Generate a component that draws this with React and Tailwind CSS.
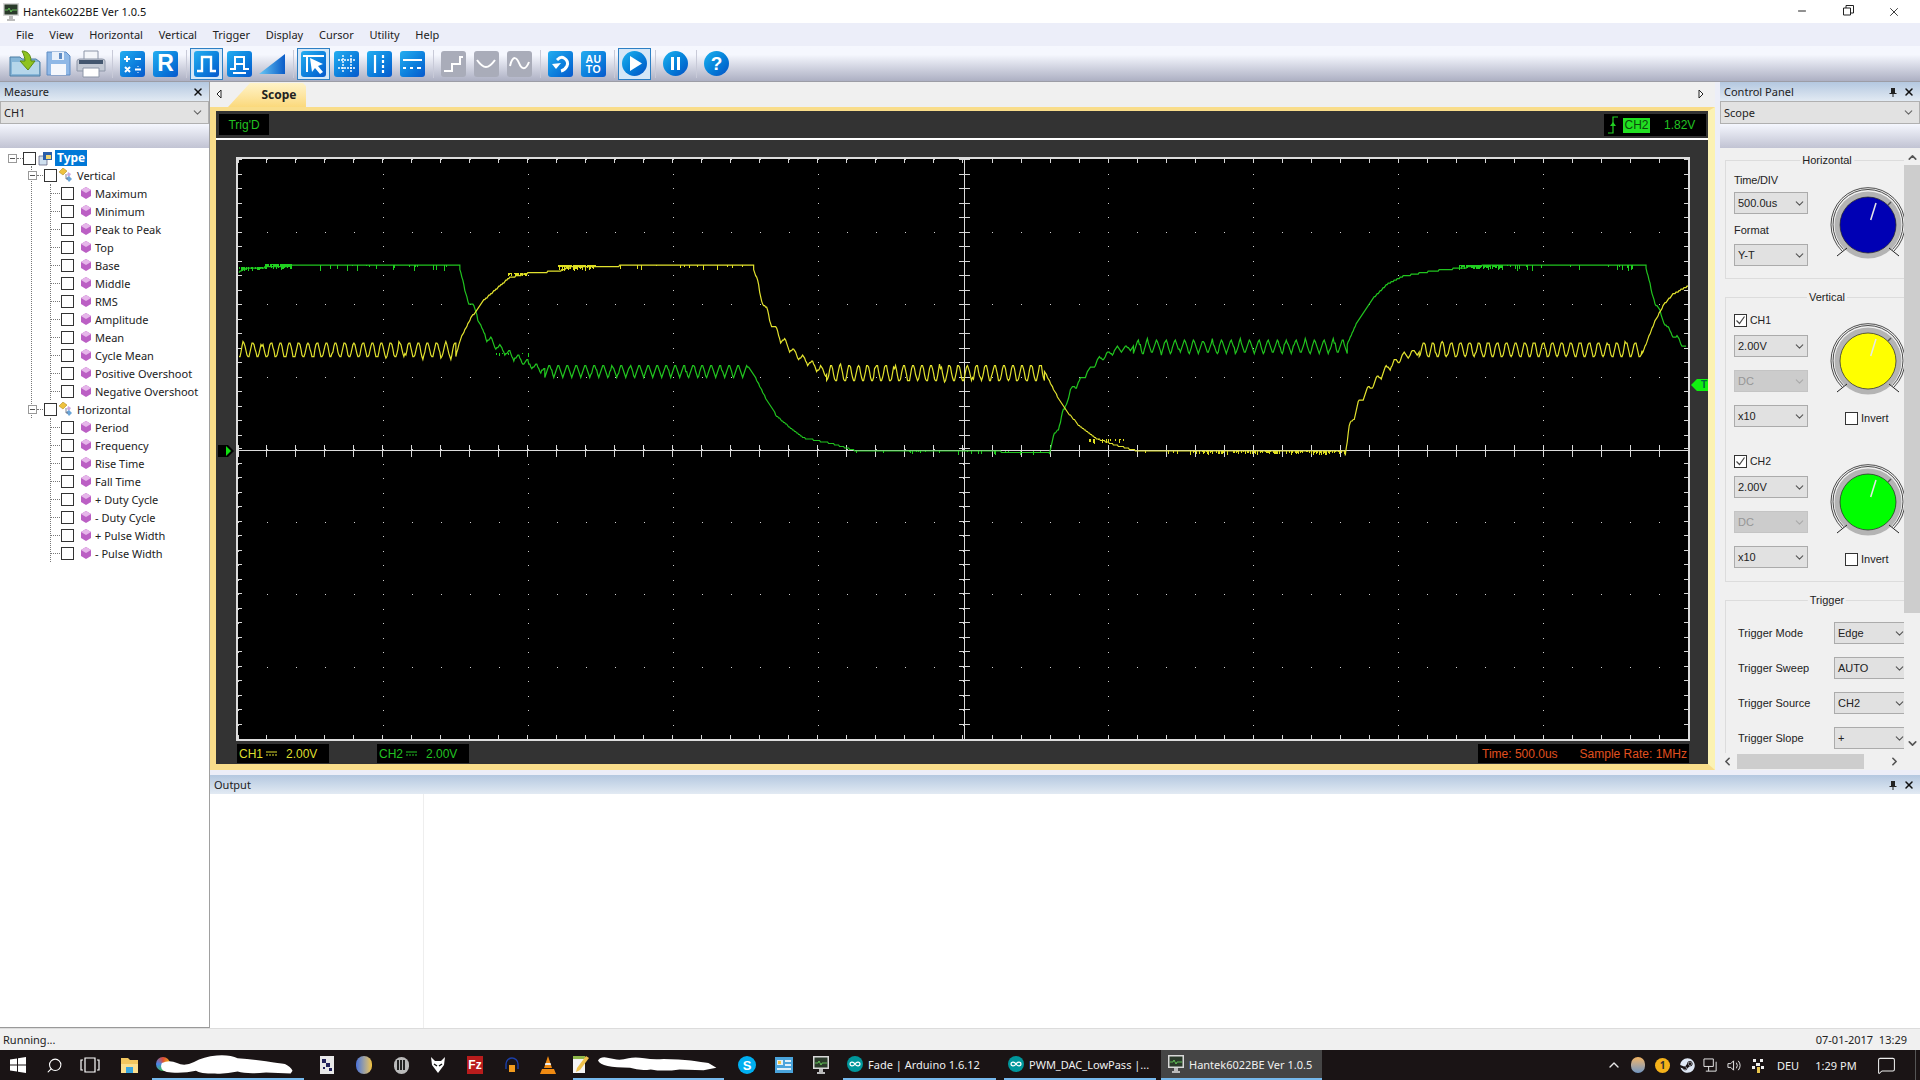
import React from 'react';
import { ChevronDown, ChevronUp, Minus, X, Search, MessageSquare, ChevronLeft, ChevronRight } from 'lucide-react';
import { FaSteam } from 'react-icons/fa';

// waveform helpers
function rng(seed) {
  let s = seed;
  return () => {
    s = (s * 9301 + 49297) % 233280;
    return s / 233280;
  };
}

function interp(keys, x) {
  for (let i = 1; i < keys.length; i++) {
    if (x <= keys[i][0]) {
      const [x0, y0] = keys[i - 1];
      const [x1, y1] = keys[i];
      return y0 + ((y1 - y0) * (x - x0)) / (x1 - x0 || 1);
    }
  }
  return keys[keys.length - 1][1];
}

// each segment: keys, ripple amplitude, ripple period
function trace(segs, seed) {
  const r = rng(seed);
  const pts = [];
  segs.forEach(({ keys, amp = 0, period = 9, square = false }) => {
    const start = keys[0][0];
    const end = keys[keys.length - 1][0];
    for (let x = start; x <= end; x += 1) {
      const ph = ((x - start) % period) / period;
      let tri = Math.abs(2 * ph - 1) * 2 - 1;
      if (square) tri = Math.max(-1, Math.min(1, tri * 1.7));
      let y = interp(keys, x) + amp * tri;
      if (amp > 0 && r() > 0.88) y += amp * 0.8 * (r() - 0.5);
      y = Math.round(y / 1.5) * 1.5;
      pts.push(`${x},${y}`);
    }
  });
  return pts.join(' ');
}

// short vertical spikes around a flat part of a trace
function spikes(x0, x1, y, density, len, seed) {
  const r = rng(seed);
  let d = '';
  for (let x = x0; x < x1; x += 1) {
    if (r() < density) d += `M${x} ${y}v${Math.round(1 + r() * len)}`;
  }
  return d;
}

const green = trace(
  [
    { keys: [[239, 272], [242, 268], [268, 266], [300, 264], [460, 264]] },
    { keys: [[460, 264], [465, 292], [471, 303], [477, 312], [483, 332], [494, 343], [511, 354], [532, 364], [545, 370]], amp: 4, period: 9 },
    { keys: [[545, 370], [747, 370]], amp: 7, period: 9 },
    { keys: [[747, 364], [754, 373], [766, 397], [777, 415], [792, 428], [804, 437], [830, 442], [857, 450]] },
    { keys: [[857, 450], [1050, 451]] },
    { keys: [[1050, 450], [1054, 437], [1060, 423], [1071, 390], [1083, 377], [1100, 358], [1118, 348], [1134, 346]], amp: 3, period: 9 },
    { keys: [[1134, 345.5], [1348, 345.5]], amp: 7.5, period: 9.3 },
    { keys: [[1348, 343], [1357, 323], [1373, 298], [1388, 283], [1404, 275], [1433, 270], [1460, 267], [1490, 264], [1647, 264]] },
    { keys: [[1647, 264], [1652, 290], [1661, 312], [1670, 330], [1681, 340], [1687, 347]], amp: 3, period: 9 },
  ],
  7,
);

const yellow = trace(
  [
    { keys: [[239, 349], [456, 349]], amp: 6.5, period: 9.2, square: true },
    { keys: [[456, 355], [461, 337], [471, 317], [483, 300], [494, 290], [509, 277], [528, 272], [559, 270], [574, 265], [754, 264]] },
    { keys: [[754, 264], [760, 292], [771, 320], [781, 337], [796, 353], [827, 372]], amp: 4, period: 9 },
    { keys: [[827, 372], [1045, 372]], amp: 7, period: 9.1, square: true },
    { keys: [[1045, 370], [1056, 392], [1067, 410], [1080, 425], [1096, 437], [1116, 444], [1138, 450], [1346, 450]] },
    { keys: [[1346, 450], [1350, 428], [1359, 403], [1370, 387], [1388, 367], [1404, 355], [1420, 350]], amp: 4, period: 9 },
    { keys: [[1420, 348.5], [1643, 348.5]], amp: 6.5, period: 9.2, square: true },
    { keys: [[1643, 353], [1656, 320], [1665, 303], [1674, 293], [1689, 285]] },
  ],
  13,
);

const greenSpikes =
  spikes(240, 266, 266, 0.6, 3, 3) +
  spikes(266, 293, 263, 0.95, 5, 5) +
  spikes(293, 450, 264, 0.12, 5, 9) +
  spikes(1460, 1504, 264, 0.85, 4, 11) +
  spikes(1504, 1640, 264, 0.1, 5, 15) +
  spikes(857, 1050, 450, 0.1, 3, 21) +
  spikes(495, 530, 352, 0.05, 3, 22);

const yellowSpikes =
  spikes(509, 528, 272, 0.8, 3, 31) +
  spikes(559, 597, 264, 0.9, 5, 33) +
  spikes(597, 750, 264, 0.1, 5, 37) +
  spikes(1140, 1185, 450, 0.1, 3, 41) +
  spikes(1185, 1346, 450, 0.5, 3, 43) +
  spikes(1090, 1125, 438, 0.35, 5, 45);

const cols = Array.from({ length: 11 }, (_, i) => 238 + i * 145.1);
const rows = Array.from({ length: 9 }, (_, i) => 158 + i * 72.5);

function ScopeGrid() {
  let dots = '';
  let ticks = '';
  cols.forEach((x) => {
    for (let y = 158; y < 738; y += 14.5) dots += `M${Math.round(x)} ${Math.round(y)}h1v1h-1z`;
  });
  rows.forEach((y) => {
    for (let x = 238; x < 1689; x += 29.02) dots += `M${Math.round(x)} ${Math.round(y)}h1v1h-1z`;
  });
  for (let x = 238; x < 1689; x += 29.02) {
    const X = Math.round(x);
    ticks += `M${X} 444v12M${X} 158v4M${X} 738v-4`;
  }
  for (let y = 158; y < 738; y += 14.5) {
    const Y = Math.round(y);
    ticks += `M959 ${Y}h12M238 ${Y}h4M1689 ${Y}h-4`;
  }
  return (
    <g shapeRendering="crispEdges">
      <path d={dots} fill="#cfcfcf" />
      <path d={ticks} stroke="#d8d8d8" strokeWidth="1" fill="none" />
      <path d="M238 450H1689M965 158V738" stroke="#dcdcdc" strokeWidth="1" fill="none" />
    </g>
  );
}

function Tile({ gray, children, className = '' }) {
  return (
    <div
      className={`flex h-[26px] w-[25px] shrink-0 items-center justify-center rounded-[3px] ${
        gray ? 'bg-[#a9acb9]' : 'bg-linear-to-br from-[#25aef0] to-[#0a58cc]'
      } ${className}`}
    >
      {children}
    </div>
  );
}

function Glyph({ d, width = 2, dash }) {
  return (
    <svg viewBox="0 0 25 26" className="h-[26px] w-[25px]">
      <path d={d} fill="none" stroke="#fff" strokeWidth={width} strokeDasharray={dash} />
    </svg>
  );
}

function Selected({ children, className = '' }) {
  return (
    <div className={`flex h-[32px] w-[33px] shrink-0 items-center justify-center border border-[#2d7fc4] bg-[#d5e7f7] ${className}`}>
      {children}
    </div>
  );
}

function Round({ children, className = '' }) {
  return (
    <div className={`flex h-[25px] w-[25px] shrink-0 items-center justify-center rounded-full bg-linear-to-br from-[#1fb3ef] to-[#0a50c4] text-white ${className}`}>
      {children}
    </div>
  );
}

function Sep({ className = '' }) {
  return <div className={`h-[28px] w-px shrink-0 bg-[#c8cad8] ${className}`} />;
}

function Toolbar() {
  return (
    <div className="flex h-[36px] items-center border-b border-[#9c9da6] bg-linear-to-b from-[#f5f7fe] from-25% to-[#adb0c3] pl-[9px]">
      <svg viewBox="0 0 32 28" className="h-[28px] w-[32px] shrink-0">
        <path d="M1 7h10l2 2h14l4 3v14H1z" fill="#86b6d8" stroke="#4d7ea5" />
        <path d="M3 12h27v12H3z" fill="#b5d6ea" />
        <path d="M13 1c5 0 9 3 9 10h4l-7 9-8-9h5c0-3-1-6-3-10z" fill="#8fc31f" stroke="#5b8a10" />
      </svg>
      <svg viewBox="0 0 25 25" className="ml-[5px] h-[25px] w-[25px] shrink-0">
        <path d="M1 1h19l4 4v19H1z" fill="#8fb8e6" stroke="#5f8cc4" />
        <path d="M6 1h12v8H6z" fill="#e9f1fb" />
        <path d="M13 2h3v6h-3z" fill="#5f8cc4" />
        <path d="M5 13h15v11H5z" fill="#f4f7fc" />
      </svg>
      <svg viewBox="0 0 30 28" className="ml-[5px] h-[28px] w-[30px] shrink-0">
        <path d="M8 1h14v9H8z" fill="#f4f6fa" stroke="#8d96a8" />
        <path d="M1 11q0-2 3-2h22q3 0 3 2v10H1z" fill="#c3c9d4" stroke="#8d96a8" />
        <path d="M3 10h24v4H3z" fill="#43566f" />
        <path d="M7 18h16v9H7z" fill="#fff" stroke="#8d96a8" />
      </svg>
      <Sep className="ml-[6px]" />
      <Tile className="ml-[7px]">
        <Glyph d="M4 8h6M7 5v6M15 8h6M5 16l5 5M10 16l-5 5M15 18.500h6M18 15.500v.5M18 21v.5" />
      </Tile>
      <Tile className="ml-[8px] font-['Liberation_Sans',sans-serif] text-[23px] font-bold text-white">R</Tile>
      <Sep className="ml-[8px]" />
      <Selected className="ml-[3px]">
        <Tile>
          <Glyph d="M3 20h5V6h9v14h5" width="2.4" />
        </Tile>
      </Selected>
      <Tile className="ml-[4px]">
        <Glyph d="M3 18h5V6h9v12h5M9 13h7M6 22h13" width="2" />
      </Tile>
      <svg viewBox="0 0 26 20" className="ml-[7px] h-[20px] w-[26px] shrink-0">
        <defs>
          <linearGradient id="ramp" x1="0" y1="0" x2="1" y2="0">
            <stop offset="0" stopColor="#69c8f5" />
            <stop offset="1" stopColor="#0b5cc8" />
          </linearGradient>
        </defs>
        <path d="M0 20L26 0V20z" fill="url(#ramp)" />
      </svg>
      <Sep className="ml-[8px]" />
      <Selected className="ml-[3px]">
        <Tile>
          <svg viewBox="0 0 25 26" className="h-[26px] w-[25px]">
            <path d="M2 5h21M6 5v16" stroke="#fff" strokeWidth="2" fill="none" />
            <path d="M9 7l13 6-5 2 5 6-3 2-5-6-3 4z" fill="#fff" />
          </svg>
        </Tile>
      </Selected>
      <Tile className="ml-[4px]">
        <Glyph d="M4 9h17M4 17h17M9 4v18M17 4v18" width="1.4" dash="2 1" />
      </Tile>
      <Tile className="ml-[8px]">
        <svg viewBox="0 0 25 26" className="h-[26px] w-[25px]">
          <path d="M8 4v18" stroke="#fff" strokeWidth="2.200" />
          <path d="M16 4v18" stroke="#fff" strokeWidth="2.200" strokeDasharray="3 2" />
        </svg>
      </Tile>
      <Tile className="ml-[8px]">
        <Glyph d="M3 9h19M3 17h3M10 17h3M17 17h4" width="2" />
      </Tile>
      <Sep className="ml-[8px]" />
      <Tile gray className="ml-[7px]">
        <Glyph d="M3 20h8v-7h8V6h3" width="2" />
      </Tile>
      <Tile gray className="ml-[8px]">
        <Glyph d="M3 9q5 7 9 7t9-7" width="2" />
      </Tile>
      <Tile gray className="ml-[8px]">
        <Glyph d="M3 15c3-12 7-8 9-3s6 9 10-1" width="2" />
      </Tile>
      <Sep className="ml-[8px]" />
      <Tile className="ml-[7px]">
        <svg viewBox="0 0 25 26" className="h-[26px] w-[25px]">
          <path d="M9 9q4-4 7-2 5 3 3 8-2 4-6 5" fill="none" stroke="#fff" strokeWidth="3" />
          <path d="M4 13l9-1-5 6z" fill="#fff" />
        </svg>
      </Tile>
      <Tile className="ml-[8px] flex-col font-['Liberation_Sans',sans-serif] text-[10.5px] leading-[10px] font-bold tracking-[0.5px] text-white">
        <span>AU</span>
        <span>TO</span>
      </Tile>
      <Sep className="ml-[8px]" />
      <Selected className="ml-[3px]">
        <Round>
          <svg viewBox="0 0 25 25" className="h-[25px] w-[25px]">
            <path d="M8 5l12 7.500L8 20z" fill="#fff" />
          </svg>
        </Round>
      </Selected>
      <Sep className="ml-[4px]" />
      <Round className="ml-[7px]">
        <svg viewBox="0 0 25 25" className="h-[25px] w-[25px]">
          <path d="M8 6h3v13H8zM14 6h3v13h-3z" fill="#fff" />
        </svg>
      </Round>
      <Sep className="ml-[8px]" />
      <Round className="ml-[7px] font-['Liberation_Sans',sans-serif] text-[19px] font-bold">?</Round>
    </div>
  );
}

function Gem() {
  return (
    <svg viewBox="0 0 10 12" className="h-[12px] w-[10px] shrink-0">
      <path d="M5 0l5 3v6l-5 3-5-3V3z" fill="#bb5fc4" />
      <path d="M5 0l5 3-5 3-5-3z" fill="#e6b6ea" />
    </svg>
  );
}

function Folderish() {
  return (
    <svg viewBox="0 0 15 15" className="h-[15px] w-[15px] shrink-0">
      <path d="M1 4l4-4 4 3-4 4z" fill="#eec23f" stroke="#a67f10" strokeWidth=".5" />
      <path d="M10 4l3 2-2 3-2-2z" fill="#c9a9e0" />
      <path d="M8 10l3-2 3 3-3 3z" fill="#6aa5d8" />
      <path d="M8 6v5h2" fill="none" stroke="#667" strokeWidth=".8" />
    </svg>
  );
}

function Check({ on }) {
  return (
    <div className="flex h-[13px] w-[13px] shrink-0 items-center justify-center border border-[#333] bg-white">
      {on && (
        <svg viewBox="0 0 11 11" className="h-[11px] w-[11px]">
          <path d="M1.500 5.500l3 3 5-7" fill="none" stroke="#444" strokeWidth="1.200" />
        </svg>
      )}
    </div>
  );
}

function ExpandBox({ className = '' }) {
  return (
    <div className={`relative flex h-[9px] w-[9px] shrink-0 items-center justify-center border border-[#999] bg-white ${className}`}>
      <div className="h-px w-[5px] bg-[#555]" />
    </div>
  );
}

function Leaf({ label }) {
  return (
    <div className="flex h-[18px] items-center last:-mb-[9px]">
      <div className="w-[9px] border-t border-dotted border-[#777]" />
      <div className="ml-px">
        <Check />
      </div>
      <div className="ml-[7px]">
        <Gem />
      </div>
      <span className="ml-[4px] whitespace-nowrap">{label}</span>
    </div>
  );
}

function Branch({ label }) {
  return (
    <div className="flex h-[18px] items-center">
      <ExpandBox className="-ml-[4px]" />
      <div className="w-[6px] border-t border-dotted border-[#777]" />
      <div className="ml-px">
        <Check />
      </div>
      <div className="ml-px">
        <Folderish />
      </div>
      <span className="ml-[4px]">{label}</span>
    </div>
  );
}

const verticalItems = ['Maximum', 'Minimum', 'Peak to Peak', 'Top', 'Base', 'Middle', 'RMS', 'Amplitude', 'Mean', 'Cycle Mean', 'Positive Overshoot', 'Negative Overshoot'];
const horizontalItems = ['Period', 'Frequency', 'Rise Time', 'Fall Time', '+ Duty Cycle', '- Duty Cycle', '+ Pulse Width', '- Pulse Width'];

function MeasureTree() {
  return (
    <div className="min-h-0 flex-1 border-b border-[#999] bg-white text-[#222]">
      <div className="flex h-[18px] translate-y-px items-center pl-[8px]">
        <ExpandBox />
        <div className="w-[6px] border-t border-dotted border-[#777]" />
        <Check />
        <svg viewBox="0 0 15 15" className="ml-[2px] h-[15px] w-[15px] shrink-0">
          <path d="M1 5h8v9H1z" fill="#cfe0ef" stroke="#557" strokeWidth=".7" />
          <path d="M5 1h9v8H5z" fill="#2c5fa8" />
          <path d="M8 4h5v4H8z" fill="#f2d873" />
        </svg>
        <span className="ml-[2px] flex h-[16px] items-center bg-[#0078d7] px-[2px] text-[12px] font-bold text-white">Type</span>
      </div>
      <div className="mb-[9px] ml-[31px] border-l border-dotted border-[#777] last:mb-0">
        <Branch label="Vertical" />
        <div className="mb-[9px] ml-[18px] border-l border-dotted border-[#777]">
          {verticalItems.map((t) => (
            <Leaf key={t} label={t} />
          ))}
        </div>
        <div className="-mb-[9px]">
          <Branch label="Horizontal" />
        </div>
      </div>
      <div className="ml-[50px] border-l border-dotted border-[#777]">
        {horizontalItems.map((t) => (
          <Leaf key={t} label={t} />
        ))}
      </div>
    </div>
  );
}

function PanelHeader({ title, pin }) {
  return (
    <div className="flex h-[19px] items-center bg-linear-to-b from-[#b4c8e0] to-[#e2eaf3] pr-[5px] pl-[4px] text-[#222]">
      <span className="pb-px">{title}</span>
      {pin && (
        <svg viewBox="0 0 10 10" className="mr-[5px] ml-auto h-[10px] w-[10px]">
          <path d="M3 1h4v5h1.500v1H5.500v3h-1V7h-3V6H3z" fill="#222" />
        </svg>
      )}
      <X size={12} strokeWidth={3} className={pin ? '' : 'ml-auto'} color="#111" />
    </div>
  );
}

function Combo({ label }) {
  return (
    <div className="flex h-[23px] items-center border border-[#b0b0b0] bg-[#e2e2e2] pr-[4px] pl-[3px] text-[#222]">
      <span>{label}</span>
      <ChevronDown size={13} className="ml-auto" color="#666" />
    </div>
  );
}

function Band() {
  return <div className="h-[24px] bg-linear-to-b from-[#f5f7fe] to-[#c1c3d3]" />;
}

function Select({ label, disabled }) {
  return (
    <div
      className={`flex h-[22px] w-[74px] shrink-0 items-center border pl-[3px] font-['Liberation_Sans',sans-serif] text-[11px] ${
        disabled ? 'border-[#c4c4c4] bg-[#cccccc] text-[#969696]' : 'border-[#ababab] bg-[#e1e1e1] text-[#222]'
      }`}
    >
      <span>{label}</span>
      <ChevronDown size={13} className="mr-[1px] ml-auto" color={disabled ? '#aaa' : '#555'} />
    </div>
  );
}

function Knob({ color, className = '' }) {
  return (
    <svg viewBox="-38 -38 76 76" className={`h-[76px] w-[76px] shrink-0 overflow-visible ${className}`}>
      <path d="M-26 26A37 37 0 1 1 26 26" fill="none" stroke="#222" strokeWidth=".8" />
      <path d="M-24.500 24.500A35 35 0 1 1 24.500 24.500" fill="none" stroke="#222" strokeWidth=".8" />
      <circle r="33.500" fill="#b4b4b4" />
      <circle r="28" fill={color} stroke="#222" strokeWidth=".7" />
      <path d="M2.700 -5L8 -22" stroke="#e6e6e6" strokeWidth="1.500" />
      <path d="M20 -20L23 -23" stroke="#555" strokeWidth="1.500" />
      <path d="M-31 31L-21 23M31 31L21 23" stroke="#222" strokeWidth="1" />
    </svg>
  );
}

function Group({ title, className = '', children }) {
  return (
    <div className={`relative w-[204px] border border-[#dcdcdc] ${className}`}>
      <span className="absolute -top-[6px] left-1/2 -translate-x-1/2 bg-[#f0f0f0] px-[2px] font-['Liberation_Sans',sans-serif] text-[11px] text-[#222]">
        {title}
      </span>
      {children}
    </div>
  );
}

function Channel({ name, color, volts }) {
  return (
    <div className="flex">
      <div className="w-[74px]">
        <div className="flex h-[13px] items-center gap-[3px]">
          <Check on />
          <span className="font-['Liberation_Sans',sans-serif] text-[10.500px] text-[#222]">{name}</span>
        </div>
        <div className="mt-[8px]">
          <Select label={volts} />
        </div>
        <div className="mt-[13px]">
          <Select label="DC" disabled />
        </div>
        <div className="mt-[13px]">
          <Select label="x10" />
        </div>
      </div>
      <div className="ml-[22px]">
        <Knob color={color} className="mt-[9px]" />
        <div className="mt-[13px] ml-[15px] flex items-center gap-[3px] font-['Liberation_Sans',sans-serif] text-[11px] text-[#222]">
          <Check />
          <span>Invert</span>
        </div>
      </div>
    </div>
  );
}

function TriggerRow({ label, value }) {
  return (
    <div className="mb-[13px] flex items-center pl-[12px] font-['Liberation_Sans',sans-serif] text-[11px] text-[#222]">
      <span className="w-[96px]">{label}</span>
      <Select label={value} />
    </div>
  );
}

function ControlPanel() {
  return (
    <div className="flex w-[200px] shrink-0 flex-col">
      <PanelHeader title="Control Panel" pin />
      <Combo label="Scope" />
      <Band />
      <div className="flex h-[605px]">
        <div className="h-full w-[184px] overflow-hidden bg-[#f0f0f0] pt-[12px] pl-[5px]">
          <Group title="Horizontal" className="h-[119px]">
            <div className="flex pl-[8px]">
              <div className="w-[74px]">
                <div className="mt-[11px] flex h-[16px] items-center font-['Liberation_Sans',sans-serif] text-[11px] tracking-[-0.2px] text-[#222]">Time/DIV</div>
                <div className="mt-[4px]">
                  <Select label="500.0us" />
                </div>
                <div className="mt-[8px] flex h-[16px] items-center font-['Liberation_Sans',sans-serif] text-[11px] text-[#222]">Format</div>
                <div className="mt-[6px]">
                  <Select label="Y-T" />
                </div>
              </div>
              <Knob color="#0000b4" className="mt-[26px] ml-[22px]" />
            </div>
          </Group>
          <Group title="Vertical" className="mt-[18px] h-[285px]">
            <div className="pt-[16px] pl-[8px]">
              <Channel name="CH1" color="#ffff00" volts="2.00V" />
              <div className="mt-[28px]">
                <Channel name="CH2" color="#00ff00" volts="2.00V" />
              </div>
            </div>
          </Group>
          <Group title="Trigger" className="mt-[18px] h-[200px] pt-[21px]">
            <TriggerRow label="Trigger Mode" value="Edge" />
            <TriggerRow label="Trigger Sweep" value="AUTO" />
            <TriggerRow label="Trigger Source" value="CH2" />
            <TriggerRow label="Trigger Slope" value="+" />
          </Group>
        </div>
        <div className="flex w-[16px] flex-col items-center bg-[#f0f0f0]">
          <ChevronUp size={13} strokeWidth={3} color="#555" className="mt-[3px]" />
          <div className="mt-[1px] h-[448px] w-full bg-[#cdcdcd]" />
          <ChevronDown size={13} strokeWidth={3} color="#555" className="mt-auto mb-[3px]" />
        </div>
      </div>
      <div className="flex h-[17px] items-center bg-[#f0f0f0]">
        <ChevronLeft size={13} strokeWidth={3} color="#555" className="ml-[1px]" />
        <div className="ml-[3px] h-[15px] w-[127px] bg-[#cdcdcd]" />
        <ChevronRight size={13} strokeWidth={3} color="#555" className="ml-[24px]" />
      </div>
    </div>
  );
}

function Coupling({ className }) {
  return (
    <svg viewBox="0 0 11 5" className={`h-[5px] w-[11px] ${className}`}>
      <path d="M0 1h11" stroke="currentColor" />
      <path d="M0 4h11" stroke="currentColor" strokeDasharray="2 1" />
    </svg>
  );
}

function ScopeView() {
  return (
    <div className="flex w-[1505px] shrink-0 flex-col">
      {/* tab strip */}
      <div className="relative flex h-[25px] items-end bg-[#f0f0f0]">
        <svg viewBox="0 0 6 10" className="mb-[8px] ml-[6px] h-[10px] w-[6px]">
          <path d="M5 1L1 5l4 4z" fill="#fff" stroke="#222" />
        </svg>
        <div className="ml-[6px] flex h-[24px] w-[78px] items-center justify-center bg-linear-to-b from-[#fff3c8] to-[#fbd97c] pl-[24px] text-[12px] font-bold text-[#222] [clip-path:polygon(0_100%,22px_0,75px_0,78px_3px,78px_100%)]">
          Scope
        </div>
        <svg viewBox="0 0 6 10" className="mr-[11px] mb-[8px] ml-auto h-[10px] w-[6px]">
          <path d="M1 1l4 4-4 4z" fill="#fff" stroke="#222" />
        </svg>
      </div>
      {/* yellow frame */}
      <div className="flex h-[663px] flex-col border-t-[4px] border-r-[7px] border-b-[6px] border-l-[6px] border-t-[#f9dd8a] border-r-[#fbf2b4] border-b-[#f9dd8a] border-l-[#f9dd8a] bg-[#333333] font-['Liberation_Sans',sans-serif] text-[12px]">
        <div className="flex h-[27px] items-start justify-between pt-[3px] pr-[2px] pl-[3px]">
          <div className="flex h-[21px] w-[50px] items-center justify-center bg-black text-[#22c322]">Trig'D</div>
          <div className="flex h-[22px] w-[102px] items-center bg-black pl-[4px] text-[#22c322]">
            <svg viewBox="0 0 10 18" className="h-[18px] w-[10px]">
              <path d="M0 17h5V1h5" fill="none" stroke="#22d022" strokeWidth="1.200" />
              <path d="M2 10l3-4 3 4z" fill="#22d022" />
            </svg>
            <span className="ml-[5px] flex h-[15px] w-[27px] items-center justify-center bg-[#22e022] text-[#0b4a0b]">CH2</span>
            <span className="ml-[14px]">1.82V</span>
          </div>
        </div>
        <div className="h-[2px] bg-white" />
        <div className="relative pt-[17px] pr-[18px] pl-[20px]">
          <svg viewBox="0 0 17 12" className="absolute top-[305px] left-[2px] h-[12px] w-[17px]">
            <path d="M0 0h10l6 6-6 6H0z" fill="#000" />
            <path d="M8 1l5 5-5 5z" fill="#10e010" />
          </svg>
          <div className="absolute top-[239px] right-0 flex h-[12px] w-[17px] items-center justify-end bg-[#10f010] pr-[1px] text-[10px] font-bold text-[#064] [clip-path:polygon(100%_0,35%_0,0_50%,35%_100%,100%_100%)]">
            T
          </div>
          <div className="h-[584px] border-2 border-[#dddddd] bg-black">
            <svg viewBox="238 158 1451 580" className="h-[580px] w-full">
              <ScopeGrid />
              <polyline points={green} fill="none" stroke="#21c41f" strokeWidth="1.200" />
              <path d={greenSpikes} stroke="#20cf20" strokeWidth="1" fill="none" shapeRendering="crispEdges" />
              <polyline points={yellow} fill="none" stroke="#e2e22e" strokeWidth="1.200" />
              <path d={yellowSpikes} stroke="#dede20" strokeWidth="1" fill="none" shapeRendering="crispEdges" />
            </svg>
          </div>
        </div>
        <div className="flex flex-1 items-start pt-[3px] pr-[19px] pl-[21px]">
          <div className="flex h-[19px] w-[92px] items-center bg-black pl-[2px] text-[#dede2e]">
            <span>CH1</span>
            <Coupling className="ml-[3px]" />
            <span className="ml-[9px]">2.00V</span>
          </div>
          <div className="ml-[48px] flex h-[19px] w-[92px] items-center bg-black pl-[2px] text-[#22c322]">
            <span>CH2</span>
            <Coupling className="ml-[3px]" />
            <span className="ml-[9px]">2.00V</span>
          </div>
          <div className="ml-auto flex h-[19px] w-[211px] items-center bg-black pl-[4px] text-[#e0501f]">
            <span>Time: 500.0us</span>
            <span className="ml-[22px]">Sample Rate: 1MHz</span>
          </div>
        </div>
      </div>
    </div>
  );
}

function TaskIcon({ className = '', children }) {
  return <div className={`flex h-full shrink-0 items-center justify-center ${className}`}>{children}</div>;
}

function ArduinoLogo() {
  return (
    <svg viewBox="0 0 16 16" className="h-[16px] w-[16px] shrink-0">
      <circle cx="8" cy="8" r="8" fill="#00979c" />
      <path d="M8 8c-2-3-5-2-5 0s3 3 5 0 5-2 5 0-3 3-5 0" fill="none" stroke="#fff" strokeWidth="1.300" />
    </svg>
  );
}

function MonitorLogo() {
  return (
    <svg viewBox="0 0 16 18" className="h-[18px] w-[16px] shrink-0">
      <path d="M0 0h16v13H0z" fill="#d8d8d8" />
      <path d="M1.500 1.500h13v10h-13z" fill="#2a3a2a" />
      <path d="M2 7h3l1-2 2 4 1-2h5" fill="none" stroke="#6fdc5f" strokeWidth=".8" />
      <path d="M6 13h4v3h2v2H4v-2h2z" fill="#bbb" />
    </svg>
  );
}

function AppButton({ className = '', active, icon, label }) {
  return (
    <div className={`relative flex h-full shrink-0 items-center border-b-2 border-[#76b9ed] pl-[4px] ${active ? 'bg-[#454545]' : ''} ${className}`}>
      {icon}
      <span className="ml-[5px] whitespace-nowrap">{label}</span>
    </div>
  );
}

function Taskbar() {
  return (
    <div className="flex h-[30px] items-center bg-[#1a1415] text-[11px] text-[#f0f0f0]">
      <TaskIcon className="w-[36px]">
        <svg viewBox="0 0 16 16" className="h-[16px] w-[16px]">
          <path d="M0 2.500l7-1v6H0zM8 1.300L16 0v7.500H8zM0 8.500h7v6l-7-1zM8 8.500h8V16l-8-1.300z" fill="#fff" />
        </svg>
      </TaskIcon>
      <TaskIcon className="w-[36px]">
        <Search size={17} color="#fff" className="-scale-x-100" strokeWidth={1.500} />
      </TaskIcon>
      <TaskIcon className="w-[35px]">
        <svg viewBox="0 0 20 16" className="h-[16px] w-[20px]">
          <path d="M5 1h10v14H5zM3 3H1v10h2M17 3h2v10h-2" fill="none" stroke="#fff" strokeWidth="1.200" />
        </svg>
      </TaskIcon>
      <TaskIcon className="w-[45px]">
        <svg viewBox="0 0 17 16" className="h-[16px] w-[17px]">
          <path d="M0 1h7l2 2h8v13H0z" fill="#f3c75f" />
          <path d="M0 7h17v9H0z" fill="#fbe08f" />
          <path d="M5 10h7v6H5z" fill="#38a6e0" />
        </svg>
      </TaskIcon>
      <div className="flex h-full w-[152px] shrink-0 items-center border-b-2 border-[#76b9ed]">
        <div className="ml-[4px] flex items-center">
          <div className="h-[14px] w-[14px] rounded-full bg-[conic-gradient(#dd4b39,#f4c20d,#3cba54,#4885ed,#dd4b39)]" />
          <svg viewBox="0 0 150 20" className="-ml-[10px] h-[20px] w-[142px]">
            <path d="M2 9q8-4 16 0t18-1q10-6 24-7t22 3q16 1 30 3t20 3q6 3 8 7l-2 3-26-1q-20 2-30-1-14 3-24 2-16 0-20-3-12 3-26 2T2 9z" fill="#fff" />
          </svg>
        </div>
      </div>
      <TaskIcon className="ml-[5px] w-[36px]">
        <svg viewBox="0 0 14 18" className="h-[18px] w-[14px]">
          <path d="M0 0h14v18H0z" fill="#e8e8e8" />
          <path d="M2 3h4v4H2zM6 7h4v4H6zM9 12h3v3H9zM3 11h2v2H3z" fill="#23235c" />
        </svg>
      </TaskIcon>
      <TaskIcon className="ml-px w-[36px]">
        <div className="h-[18px] w-[16px] rounded-full bg-linear-to-r from-[#4a6fd8] to-[#f3c333]" />
      </TaskIcon>
      <TaskIcon className="ml-px w-[36px]">
        <div className="flex h-[17px] w-[15px] items-center justify-center gap-[1px] rounded-full bg-[#bbbbbb]">
          <div className="h-[10px] w-[2px] bg-[#222]" />
          <div className="h-[10px] w-[2px] bg-[#222]" />
          <div className="h-[10px] w-[2px] bg-[#222]" />
        </div>
      </TaskIcon>
      <TaskIcon className="ml-px w-[36px]">
        <svg viewBox="0 0 14 16" className="h-[16px] w-[14px]">
          <path d="M0 0l4 4h6l4-4-1 8-6 8-6-8z" fill="#fff" />
          <path d="M3 7l3 2M11 7L8 9" stroke="#111" strokeWidth="1.500" />
        </svg>
      </TaskIcon>
      <TaskIcon className="ml-px w-[36px]">
        <div className="flex h-[18px] w-[16px] items-center justify-center bg-[#b91c1c] font-['Liberation_Sans',sans-serif] text-[12px] font-bold text-white">Fz</div>
      </TaskIcon>
      <TaskIcon className="ml-px w-[36px]">
        <svg viewBox="0 0 14 16" className="h-[16px] w-[14px]">
          <path d="M1 12V7a6 6 0 0 1 12 0v5" fill="none" stroke="#1c3fa8" strokeWidth="1.400" />
          <path d="M4 8h6v7H4z" fill="#f39c1e" />
        </svg>
      </TaskIcon>
      <TaskIcon className="w-[36px]">
        <svg viewBox="0 0 16 18" className="h-[18px] w-[16px]">
          <path d="M8 0l4 12H4z" fill="#f08a12" />
          <path d="M5.500 7h5l.6 2H4.900z" fill="#eee" />
          <path d="M0 18l2-5h12l2 5z" fill="#f08a12" />
        </svg>
      </TaskIcon>
      <div className="ml-[7px] flex h-full w-[151px] shrink-0 items-center border-b-2 border-[#76b9ed]">
        <svg viewBox="0 0 16 18" className="h-[18px] w-[16px] shrink-0">
          <path d="M0 1h12v17H0z" fill="#f4f4f4" />
          <path d="M0 1h12v3H0z" fill="#8fb84a" />
          <path d="M4 13l9-12 3 2-9 12-4 2z" fill="#f0c24b" />
        </svg>
        <svg viewBox="0 0 150 20" className="ml-[9px] -mt-[2px] h-[20px] w-[120px]">
          <path d="M0 7q3-5 10-4l10 2q8 2 18-1 8-2 20 0 10 2 24 1 20 0 34 2t22 3l10 6-16 3-30-1q-20 3-36 0-14 2-26-2Q4 16 0 7z" fill="#fff" />
        </svg>
      </div>
      <TaskIcon className="ml-[5px] w-[36px]">
        <div className="flex h-[18px] w-[18px] items-center justify-center rounded-full bg-[#00aff0] font-['Liberation_Sans',sans-serif] text-[13px] font-bold text-white">S</div>
      </TaskIcon>
      <TaskIcon className="ml-px w-[36px]">
        <svg viewBox="0 0 18 16" className="h-[16px] w-[18px]">
          <path d="M0 0h18v16H0z" fill="#4aa4dc" />
          <path d="M2 3h6v5H2zM10 3h6v2h-6zM10 7h6v2h-6zM2 11h14v2H2z" fill="#dff0fa" />
          <path d="M3 4h3v3H3z" fill="#f0c24b" />
        </svg>
      </TaskIcon>
      <TaskIcon className="ml-px w-[36px]">
        <MonitorLogo />
      </TaskIcon>
      <AppButton className="ml-[4px] w-[153px]" icon={<ArduinoLogo />} label="Fade | Arduino 1.6.12" />
      <AppButton className="ml-[8px] w-[152px]" icon={<ArduinoLogo />} label="PWM_DAC_LowPass |..." />
      <AppButton className="ml-[5px] w-[161px] pl-[7px]" active icon={<MonitorLogo />} label="Hantek6022BE Ver 1.0.5" />
      <div className="ml-auto flex h-full items-center">
        <TaskIcon className="w-[24px]">
          <ChevronUp size={16} color="#e8e8e8" />
        </TaskIcon>
        <TaskIcon className="w-[24px]">
          <div className="h-[16px] w-[14px] rounded-full bg-linear-to-b from-[#f2b35e] to-[#6f94c0]" />
        </TaskIcon>
        <TaskIcon className="w-[25px]">
          <div className="flex h-[15px] w-[15px] items-center justify-center rounded-full bg-[#f5b21a] text-[10px] font-bold text-[#333]">1</div>
        </TaskIcon>
        <TaskIcon className="w-[24px]">
          <FaSteam size={15} color="#dfe8f5" />
        </TaskIcon>
        <TaskIcon className="w-[23px]">
          <svg viewBox="0 0 16 16" className="h-[15px] w-[15px]">
            <path d="M1 1h10v8H1zM6 9v5M14 4v10H3" fill="none" stroke="#eee" />
          </svg>
        </TaskIcon>
        <TaskIcon className="w-[24px]">
          <svg viewBox="0 0 16 16" className="h-[15px] w-[15px]">
            <path d="M1 6h3l3-3v10l-3-3H1zM10 5q2 3 0 6M12 3q4 5 0 10" fill="none" stroke="#eee" />
          </svg>
        </TaskIcon>
        <TaskIcon className="w-[24px]">
          <svg viewBox="0 0 16 16" className="h-[16px] w-[16px]">
            <path d="M3 2h3v3H3zM10 2h3v3h-3zM6 6h4v3H6zM2 9h3v3H2zM11 9h3v3h-3z" fill="#eee" />
            <path d="M7 10h3v6H7z" fill="#e8c44a" />
          </svg>
        </TaskIcon>
        <span className="w-[36px] text-center">DEU</span>
        <span className="ml-[6px] w-[48px] text-center">1:29 PM</span>
        <TaskIcon className="ml-[6px] w-[40px]">
          <MessageSquare size={19} color="#eee" strokeWidth={1.300} />
        </TaskIcon>
        <div className="mr-[4px] ml-[9px] h-full w-px bg-[#555]" />
      </div>
    </div>
  );
}

export default function App() {
  return (
    <div className="flex h-[1080px] w-[1920px] flex-col overflow-hidden bg-[#eceef8] font-['Noto_Sans',sans-serif] text-[11px] leading-none text-[#222]">
      {/* title bar */}
      <div className="flex h-[23px] items-center bg-white pl-[3px] text-[#111]">
        <MonitorLogo />
        <span className="ml-[4px]">Hantek6022BE Ver 1.0.5</span>
        <div className="ml-auto flex pr-[3px]">
          <div className="flex w-[46px] justify-center">
            <Minus size={12} color="#222" />
          </div>
          <div className="flex w-[46px] justify-center">
            <svg viewBox="0 0 11 11" className="h-[11px] w-[11px]">
              <path d="M.5 3h7v7h-7zM3 3V.5h7.500V8H8" fill="none" stroke="#222" />
            </svg>
          </div>
          <div className="flex w-[46px] justify-center">
            <X size={14} color="#222" strokeWidth={1.500} />
          </div>
        </div>
      </div>
      {/* menu */}
      <div className="flex h-[23px] items-center gap-[15.75px] bg-[#eceef9] pl-[16px]">
        {['File', 'View', 'Horizontal', 'Vertical', 'Trigger', 'Display', 'Cursor', 'Utility', 'Help'].map((m) => (
          <span key={m}>{m}</span>
        ))}
      </div>
      <Toolbar />
      <div className="flex h-[946px]">
        <div className="flex w-[210px] shrink-0 flex-col border-r border-[#a0a0a0]">
          <PanelHeader title="Measure" />
          <Combo label="CH1" />
          <Band />
          <MeasureTree />
        </div>
        <div className="flex w-[1710px] flex-col">
          <div className="flex h-[688px]">
            <ScopeView />
            <div className="w-[5px] shrink-0" />
            <ControlPanel />
          </div>
          <div className="mt-[5px] flex flex-1 flex-col bg-white">
            <PanelHeader title="Output" pin />
            <div className="flex flex-1">
              <div className="w-[214px] border-r border-[#eeeeee]" />
            </div>
          </div>
        </div>
      </div>
      {/* status bar */}
      <div className="flex h-[22px] items-center justify-between border-t border-[#dcdcdc] bg-[#f0f0f0] pr-[13px] pl-[3px]">
        <span>Running...</span>
        <span>07-01-2017&nbsp; 13:29</span>
      </div>
      <Taskbar />
    </div>
  );
}
